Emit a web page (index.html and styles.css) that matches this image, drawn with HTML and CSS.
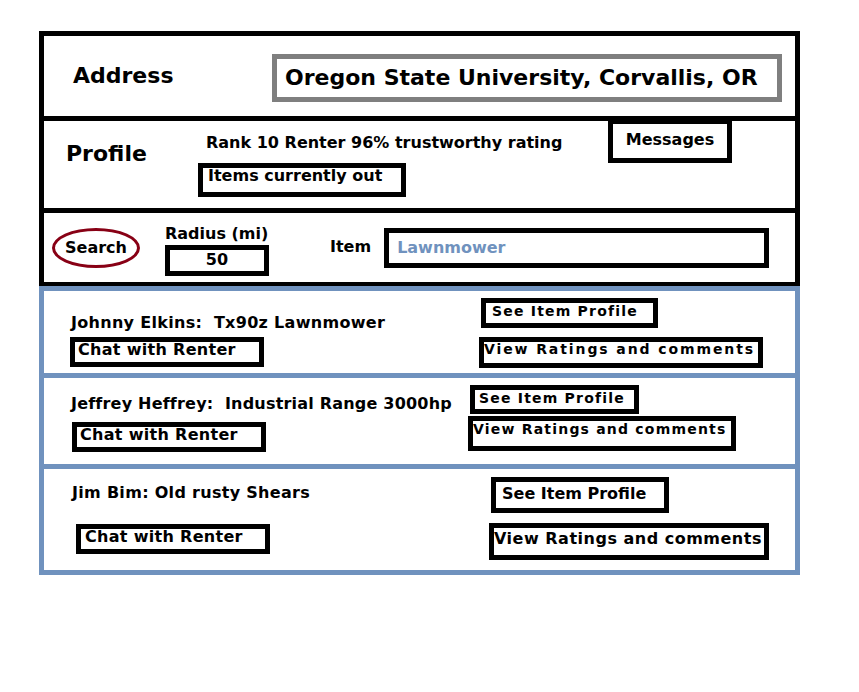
FILE: index.html
```html
<!DOCTYPE html>
<html lang="en">
<head>
<meta charset="utf-8">
<title>Rental mockup</title>
<link rel="stylesheet" href="styles.css">
</head>
<body>
<div class="sheet">
  <section class="panel panel-first address">
    <div class="address-label">Address</div>
    <div class="address-box">Oregon State University, Corvallis, OR</div>
  </section>

  <section class="panel profile">
    <div class="profile-label">Profile</div>
    <div class="profile-mid">
      <div class="rank">Rank 10 Renter 96% trustworthy rating</div>
      <div class="box items-out">Items currently out</div>
    </div>
    <div class="box messages">Messages</div>
  </section>

  <section class="panel search">
    <div class="search-oval">Search</div>
    <div class="radius">
      <div class="radius-label">Radius (mi)</div>
      <div class="box radius-box">50</div>
    </div>
    <div class="item-label">Item</div>
    <div class="box item-box">Lawnmower</div>
  </section>

  <section class="panel blue blue-first row row-1">
    <div class="row-left">
      <div class="name">Johnny Elkins:&nbsp; Tx90z Lawnmower</div>
      <div class="box chat">Chat with Renter</div>
    </div>
    <div class="row-right">
      <div class="box see small">See Item Profile</div>
      <div class="box view small">View Ratings and comments</div>
    </div>
  </section>

  <section class="panel blue row row-2">
    <div class="row-left">
      <div class="name">Jeffrey Heffrey:&nbsp; Industrial Range 3000hp</div>
      <div class="box chat">Chat with Renter</div>
    </div>
    <div class="row-right">
      <div class="box see small">See Item Profile</div>
      <div class="box view small">View Ratings and comments</div>
    </div>
  </section>

  <section class="panel blue row row-3">
    <div class="row-left">
      <div class="name">Jim Bim: Old rusty Shears</div>
      <div class="box chat">Chat with Renter</div>
    </div>
    <div class="row-right">
      <div class="box see">See Item Profile</div>
      <div class="box view">View Ratings and comments</div>
    </div>
  </section>
</div>
</body>
</html>
```

FILE: styles.css
```css
* {
  box-sizing: border-box;
}

html, body {
  margin: 0;
  padding: 0;
  background: #ffffff;
}

body {
  font-family: "DejaVu Sans", "Liberation Sans", sans-serif;
  font-weight: bold;
  font-size: 16px;
  line-height: 20px;
  color: #000000;
}

.sheet {
  width: 761px;
  margin: 31px 0 0 39px;
}

.panel {
  border-style: solid;
  border-color: #000000;
  border-width: 0 5px 5px 5px;
}

.panel-first {
  border-top-width: 5px;
}

.box {
  border: 5px solid #000000;
  white-space: nowrap;
}

/* Address */
.address {
  height: 90px;
  display: flex;
  align-items: center;
  padding-left: 29px;
}

.address-label {
  width: 199px;
  font-size: 22px;
  line-height: 26px;
}

.address-box {
  width: 510px;
  height: 48px;
  margin-top: 3px;
  border: 5px solid #7f7f7f;
  padding-left: 8px;
  display: flex;
  align-items: center;
  font-size: 22px;
  line-height: 26px;
  white-space: nowrap;
}

/* Profile */
.profile {
  height: 92px;
  display: flex;
  align-items: flex-start;
  padding-left: 22px;
}

.profile-label {
  width: 132px;
  margin-top: 20px;
  font-size: 22px;
  line-height: 26px;
}

.profile-mid {
  width: 410px;
}

.rank {
  margin-top: 12px;
  margin-left: 8px;
  white-space: nowrap;
}

.items-out {
  margin-top: 10px;
  width: 208px;
  height: 34px;
  padding-left: 5px;
  line-height: 16px;
}

.messages {
  width: 124px;
  height: 44px;
  margin-top: -2px;
  display: flex;
  justify-content: center;
  padding-top: 6px;
}

/* Search */
.search {
  height: 73px;
  border-bottom-width: 4px;
  display: flex;
  align-items: flex-start;
  padding-left: 8px;
}

.search-oval {
  width: 88px;
  height: 40px;
  margin-top: 15px;
  border: 3px solid #880015;
  border-radius: 50%;
  display: flex;
  align-items: center;
  justify-content: center;
}

.radius {
  margin-left: 25px;
  margin-top: 11px;
}

.radius-box {
  width: 104px;
  height: 31px;
  margin-top: 1px;
  text-align: center;
}

.item-label {
  margin-left: 61px;
  margin-top: 24px;
}

.item-box {
  width: 385px;
  height: 40px;
  margin-left: 13px;
  margin-top: 15px;
  padding-left: 8px;
  display: flex;
  align-items: center;
  color: #7092be;
}

/* Result rows */
.blue {
  border-color: #7092be;
}

.blue-first {
  border-top-width: 5px;
}

.row {
  display: flex;
  align-items: flex-start;
  padding-left: 26px;
}

.name {
  white-space: nowrap;
  letter-spacing: 0.3px;
}

.chat {
  width: 194px;
  height: 30px;
  line-height: 16px;
  letter-spacing: 0.3px;
}

.small {
  font-size: 14px;
  line-height: 16px;
  letter-spacing: 1.2px;
}

.row-1 {
  height: 92px;
}

.row-1 .row-left {
  width: 409px;
}

.row-1 .name {
  margin-top: 22px;
  margin-left: 1px;
}

.row-1 .chat {
  margin-top: 4px;
  padding-left: 3px;
}

.row-1 .see {
  width: 177px;
  height: 30px;
  margin-top: 7px;
  margin-left: 2px;
  padding-left: 6px;
}

.row-1 .view {
  width: 284px;
  height: 31px;
  margin-top: 9px;
  line-height: 14px;
  letter-spacing: 1.9px;
}

.row-2 {
  height: 91px;
}

.row-2 .row-left {
  width: 398px;
}

.row-2 .name {
  margin-top: 16px;
  margin-left: 1px;
  letter-spacing: 0.2px;
}

.row-2 .chat {
  margin-top: 8px;
  margin-left: 2px;
  padding-left: 3px;
}

.row-2 .see {
  width: 169px;
  height: 29px;
  margin-top: 7px;
  margin-left: 2px;
  padding-left: 4px;
}

.row-2 .view {
  width: 268px;
  height: 35px;
  margin-top: 2px;
}

.row-3 {
  height: 106px;
}

.row-3 .row-left {
  width: 419px;
}

.row-3 .name {
  margin-top: 14px;
  margin-left: 2px;
}

.row-3 .chat {
  margin-top: 21px;
  margin-left: 6px;
  padding-left: 4px;
}

.row-3 .see {
  width: 178px;
  height: 36px;
  margin-top: 8px;
  margin-left: 2px;
  padding-left: 6px;
  padding-top: 2px;
}

.row-3 .view {
  width: 280px;
  height: 37px;
  margin-top: 10px;
  padding-top: 1px;
  letter-spacing: 0.5px;
}
```
